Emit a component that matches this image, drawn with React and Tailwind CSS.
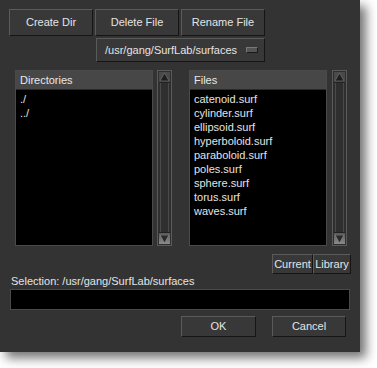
import React from 'react'

const files = [
  'catenoid.surf',
  'cylinder.surf',
  'ellipsoid.surf',
  'hyperboloid.surf',
  'paraboloid.surf',
  'poles.surf',
  'sphere.surf',
  'torus.surf',
  'waves.surf',
]

const dirs = ['./', '../']

function Button({ children, className = '' }) {
  return (
    <div
      className={`flex items-center justify-center bg-[#383838] border border-t-[#5a5a5a] border-l-[#5a5a5a] border-r-[#151515] border-b-[#151515] text-[#e4e4e4] ${className}`}
    >
      {children}
    </div>
  )
}

function ScrollBar() {
  return (
    <div className="w-[15px] h-full flex flex-col border border-[#5a5a5a] bg-[#2f2f2f] p-[1px]">
      <div className="h-[11px] bg-[#4a4a4a] flex items-center justify-center border-b border-[#222]">
        <svg width="9" height="8" viewBox="0 0 9 8">
          <polygon points="4.5,0 9,8 0,8" fill="#1e1e1e" stroke="#7a7a7a" strokeWidth="0.6" />
        </svg>
      </div>
      <div className="flex-1 border-x border-[#4a4a4a] mx-[1px]" />
      <div className="h-[12px] bg-gradient-to-b from-[#5a5a5a] to-[#8a8a8a] flex items-center justify-center border-t border-[#222]">
        <svg width="9" height="8" viewBox="0 0 9 8">
          <polygon points="0,0 9,0 4.5,8" fill="#2a2a2a" stroke="#9a9a9a" strokeWidth="0.6" />
        </svg>
      </div>
    </div>
  )
}

function ListPanel({ title, items }) {
  return (
    <div className="w-[138px] h-full flex flex-col border border-[#4a4a4a] bg-black">
      <div className="h-[19px] shrink-0 bg-[#474747] border-b border-[#2a2a2a] px-[4px] flex items-center text-[#e8e8e8]">
        {title}
      </div>
      <div className="flex flex-col pt-[2px] px-[4px]">
        {items.map((item) => (
          <div key={item} className="h-[14px] leading-[14px] text-[#e4e4e4]">
            {item}
          </div>
        ))}
      </div>
    </div>
  )
}

export default function App() {
  return (
    <div
      className="w-[377px] h-[368px] bg-white text-[11px]"
      style={{ fontFamily: '"Liberation Sans", Arial, sans-serif' }}
    >
      <div className="w-[360px] h-[352px] bg-[#333333] shadow-[6px_6px_10px_rgba(0,0,0,0.55)] flex flex-col pt-[9px]">
        {/* top buttons */}
        <div className="flex gap-[2px] pl-[9px]">
          <Button className="w-[84px] h-[27px]">Create Dir</Button>
          <Button className="w-[84px] h-[27px]">Delete File</Button>
          <Button className="w-[84px] h-[27px]">Rename File</Button>
        </div>

        {/* path selector */}
        <div className="pl-[96px] mt-[2px]">
          <div className="w-[169px] h-[24px] flex items-center justify-between bg-[#383838] border border-t-[#5a5a5a] border-l-[#5a5a5a] border-r-[#151515] border-b-[#151515] pl-[8px] pr-[6px] text-[#e4e4e4]">
            <span>/usr/gang/SurfLab/surfaces</span>
            <span className="w-[12px] h-[6px] bg-[#555] border border-t-[#777] border-l-[#777] border-r-[#1a1a1a] border-b-[#1a1a1a]" />
          </div>
        </div>

        {/* lists */}
        <div className="flex h-[176px] mt-[8px] pl-[15px]">
          <ListPanel title="Directories" items={dirs} />
          <div className="ml-[4px]">
            <ScrollBar />
          </div>
          <div className="ml-[17px]">
            <ListPanel title="Files" items={files} />
          </div>
          <div className="ml-[5px]">
            <ScrollBar />
          </div>
        </div>

        {/* current / library */}
        <div className="flex justify-end pr-[9px] mt-[8px]">
          <Button className="w-[41px] h-[20px]">Current</Button>
          <Button className="w-[38px] h-[20px]">Library</Button>
        </div>

        {/* selection */}
        <div className="pl-[11px] h-[14px] leading-[14px] text-[#e4e4e4]">
          Selection: /usr/gang/SurfLab/surfaces
        </div>
        <div className="ml-[10px] w-[340px] h-[21px] mt-[1px] bg-black border border-[#4a4a4a]" />

        {/* ok / cancel */}
        <div className="flex gap-[16px] pl-[181px] mt-[6px]">
          <Button className="w-[75px] h-[21px]">OK</Button>
          <Button className="w-[74px] h-[21px]">Cancel</Button>
        </div>
      </div>
    </div>
  )
}
